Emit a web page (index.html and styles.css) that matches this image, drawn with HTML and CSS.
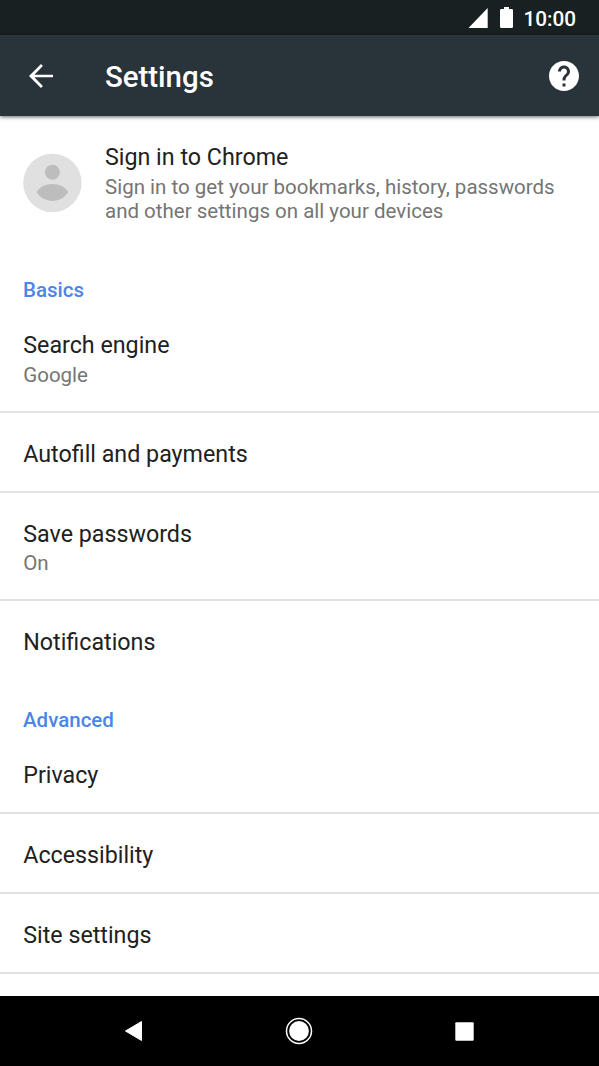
FILE: index.html
```html
<!DOCTYPE html>
<html lang="en">
<head>
<meta charset="utf-8">
<title>Settings</title>
<link rel="stylesheet" href="styles.css">
</head>
<body>
<div class="screen">
  <div class="status">
    <svg class="signal" width="20" height="20" viewBox="0 0 20 20"><path d="M.5 20L19.700 0V20Z"/></svg>
    <svg class="battery" width="13" height="21" viewBox="0 0 13 21"><path d="M4 0h5v2h2.700q1.300 0 1.300 1.300v16.400q0 1.300-1.300 1.300H1.300Q0 21 0 19.700V3.300Q0 2 1.300 2H4z"/></svg>
    <span class="clock">10:00</span>
  </div>
  <header class="bar">
    <svg class="back" width="24" height="24" viewBox="4 4 16 16"><path d="M20 11.100H7.600l5.650-5.750L12 4l-8 8 8 8 1.250-1.350L7.600 12.900H20z"/></svg>
    <h1 class="title">Settings</h1>
    <svg class="help" width="30" height="30" viewBox="2 2 20 20"><path d="M12 2C6.480 2 2 6.480 2 12s4.480 10 10 10 10-4.480 10-10S17.520 2 12 2zm1 17h-2v-2h2v2zm2.070-7.750l-.9.920C13.450 12.900 13 13.500 13 15h-2v-.5c0-1.100.45-2.100 1.170-2.830l1.240-1.260c.37-.36.590-.86.590-1.410 0-1.100-.9-2-2-2s-2 .9-2 2H8c0-2.210 1.790-4 4-4s4 1.790 4 4c0 .88-.36 1.680-.93 2.250z"/></svg>
  </header>
  <main class="content">
    <section class="account">
      <svg class="avatar" width="60" height="60" viewBox="0 0 60 60"><circle cx="30.400" cy="29.900" r="29.200" fill="#e0e0e0"/><circle cx="30.400" cy="19.200" r="7.500" fill="#bdbdbd"/><path d="M14.700 39.300C17.500 33.700 23.500 31 30.400 31S43.300 33.700 46.100 39.300C42.500 44.700 37 48 30.400 48S18.300 44.700 14.700 39.300Z" fill="#bdbdbd"/></svg>
      <div class="account-text">
        <div class="label">Sign in to Chrome</div>
        <div class="sub">Sign in to get your bookmarks, history, passwords<br>and other settings on all your devices</div>
      </div>
    </section>
    <h2 class="group basics">Basics</h2>
    <div class="row double first"><div class="label">Search engine</div><div class="sub">Google</div></div>
    <div class="row"><div class="label">Autofill and payments</div></div>
    <div class="row double"><div class="label">Save passwords</div><div class="sub">On</div></div>
    <div class="row last"><div class="label">Notifications</div></div>
    <h2 class="group">Advanced</h2>
    <div class="row"><div class="label">Privacy</div></div>
    <div class="row"><div class="label">Accessibility</div></div>
    <div class="row"><div class="label">Site settings</div></div>
  </main>
  <nav class="nav">
    <svg width="20" height="22" viewBox="0 0 20 22"><path d="M17.500 1.500V20.500L1.500 11Z" stroke="#fff" stroke-linejoin="round"/></svg>
    <svg class="home" width="28" height="28" viewBox="0 0 28 28"><circle cx="14" cy="14" r="12.500" fill="none" stroke="#fff" stroke-width="1.500"/><circle cx="14" cy="14" r="9.900"/></svg>
    <svg width="19" height="19" viewBox="0 0 19 19"><rect x=".3" y=".3" width="18.400" height="18.400" rx="1"/></svg>
  </nav>
</div>
</body>
</html>
```
FILE: styles.css
```css
* { box-sizing: border-box; }
body { margin: 0; font-family: Roboto, sans-serif; background: #fff; }
svg { display: block; flex: none; fill: #fff; }
.screen { width: 599px; height: 1066px; display: flex; flex-direction: column; overflow: hidden; }
.status { height: 35px; flex: none; background: #192022; display: flex; align-items: center; padding: 0 23px 0 468px; }
.battery { margin-left: 12px; margin-bottom: 1px; }
.clock { margin-left: auto; color: #fff; font-size: 20.700px; font-weight: 500; line-height: 24px; padding-top: 2px; }
.bar { height: 81px; flex: none; background: #28333a; display: flex; align-items: center; padding: 0 20px 0 29px; box-shadow: 0 1px 4px rgba(0,0,0,.6); position: relative; }
.title { margin: 2px 0 0 52px; color: #fff; font-size: 29.400px; font-weight: 500; line-height: 36px; }
.help { margin-left: auto; }
.content { flex: 1; min-height: 0; overflow: hidden; }
.account { display: flex; padding: 26px 23px 0 22px; height: 158px; }
.avatar { margin-top: 11px; margin-right: 23px; }
.label { font-size: 23.250px; line-height: 30px; color: #212121; white-space: nowrap; }
.sub { font-size: 20.500px; line-height: 24px; color: #757575; white-space: nowrap; margin-top: 3px; }
.row .sub { margin-top: 2px; }
.group { margin: 0; padding: 27px 23px 0; height: 53px; font-size: 20.500px; font-weight: 500; line-height: 24px; color: #4a86e8; }
.group.basics { padding-top: 4px; height: 32px; }
.row { height: 80px; padding: 26px 23.250px 0; border-bottom: 2px solid #e2e2e2; }
.row.double { height: 108px; }
.row.first { height: 107px; padding-top: 24px; }
.row.first .sub { margin-top: 3px; }
.row.last { border-bottom: 0; }
.nav { height: 70px; flex: none; background: #000; display: flex; align-items: center; justify-content: space-between; padding: 0 125px 0 124px; }
.home { margin-left: -1px; }
```
